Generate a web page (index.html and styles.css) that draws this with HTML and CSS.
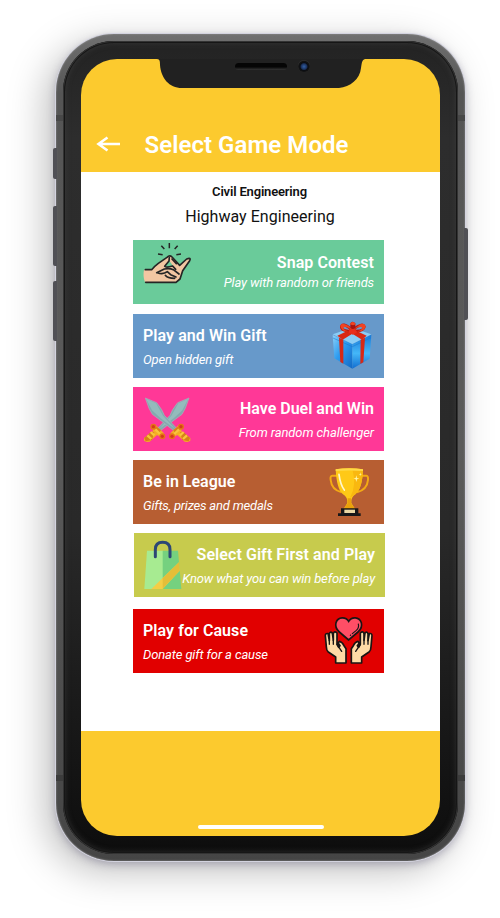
FILE: index.html
```html
<!DOCTYPE html>
<html lang="en">
<head>
<meta charset="utf-8">
<title>Select Game Mode</title>
<link rel="stylesheet" href="styles.css">
</head>
<body>
<div class="phone">
  <i class="key mute"></i><i class="key vol-up"></i><i class="key vol-down"></i><i class="key power"></i>
  <i class="band top"></i><i class="band bottom"></i>
  <div class="bezel">
    <div class="screen">
      <svg class="notch" width="208" height="30" viewBox="0 0 208 30"><path d="M0 0C3 0 3 3 3 6C4 19 12 29 25 29H182C193 28 203 20 204 9C205 3 205 1 208 0Z" fill="#212121"/></svg>
      <i class="speaker"></i><i class="camera"></i>
      <header class="bar">
        <svg class="back" width="25" height="16" viewBox="0 0 25 16"><path d="M11.500 1.500L2.500 8l9 6.500M2.500 8H24" fill="none" stroke="#fff" stroke-width="2.600"/></svg>
        <h1>Select Game Mode</h1>
      </header>
      <main>
        <div class="branch">Civil Engineering</div>
        <div class="subject">Highway Engineering</div>
        <section class="modes">
          <article class="card snap">
            <svg viewBox="9 15 192 192">
              <path fill="#f2c6a2" d="M42 104H66L84 85L112 66Q119 60 125 65L149 92L170 73Q181 66 178 76L158 107L150 130L138 142H45Q38 124 42 104Z"/>
              <path fill="#6acb9a" d="M103 96L118 77L130 94L116 97Z"/>
              <g fill="none" stroke="#252525" stroke-width="5" stroke-linecap="round" stroke-linejoin="round">
                <path d="M46 104H65Q74 93 85 85L111 67Q119 59 126 66L149 91L170 72Q184 67 179 77L158 107L150 132L138 142H47"/>
                <path d="M118 68L117 78L104 94Q108 99 128 93L137 103M126 72L139 86"/>
                <path d="M80 113L103 102Q119 99 130 104L147 117M82 113Q99 120 112 110L122 119L138 126M106 121Q112 130 134 130"/>
              </g>
              <path fill="none" stroke="#252525" stroke-width="4.500" d="M118 24V40M94 32L103 42M143 32L134 42M84 57L98 59M153 57L139 59"/>
            </svg>
            <div class="label"><h2>Snap Contest</h2><p>Play with random or friends</p></div>
          </article>
          <article class="card gift">
            <svg viewBox="0 6 192 192">
              <defs>
                <linearGradient id="left-face" x2="1" y2="1"><stop stop-color="#8bd0fa"/><stop offset=".45" stop-color="#2d9cf0"/><stop offset="1" stop-color="#1268c4"/></linearGradient>
                <linearGradient id="right-face" x2="0" y2="1"><stop stop-color="#1878d7"/><stop offset=".55" stop-color="#44b7f8"/><stop offset="1" stop-color="#126dd0"/></linearGradient>
              </defs>
              <path fill="url(#left-face)" d="M38 69L97 96V170L43 139Z"/>
              <path fill="url(#right-face)" d="M97 96L154 68L149 140L97 170Z"/>
              <path fill="#8acdf6" d="M38 67L96 47L154 67L97 96Z"/>
              <path fill="none" stroke="#1677ca" stroke-width="1.500" d="M39 78L97 104L153 77"/>
              <path fill="#d62916" d="M57 77L70 83V155L61 150ZM122 83L135 77L130 151L121 156Z"/>
              <path fill="#d92814" d="M52 71L96 50L140 71L126 83L97 65L68 83Z"/>
              <g fill="none" stroke="#b91b13" stroke-width="8"><path d="M94 56Q63 59 64 43Q68 31 92 50"/><path d="M98 56Q130 60 133 44Q129 31 102 50"/></g>
              <path fill="#a71310" d="M91 56V34Q97 25 106 34V57Z"/>
              <path fill="#f04422" d="M61 42Q64 31 75 37Q87 40 96 52L87 49Q73 40 70 49Q73 56 86 58Q65 61 61 42ZM137 42Q132 31 121 37L101 52Q124 41 127 48Q125 55 111 58Q135 60 137 42ZM89 37Q98 22 108 37L99 40Z"/>
              <path fill="#e92f1b" d="M88 52L105 50L112 61L98 68L85 61Z"/>
            </svg>
            <div class="label"><h2>Play and Win Gift</h2><p>Open hidden gift</p></div>
          </article>
          <article class="card duel">
            <svg viewBox="9 6 192 192">
              <defs><g id="sword">
                <path fill="#84a9ae" stroke="#a5b4bd" stroke-width="2" d="M46 39L80 53Q98 75 103 91L142 132L134 139L94 108L67 88L57 70Z"/>
                <path fill="#94bbbc" d="M48 41L78 55L99 92L136 133L91 99L66 76Z"/>
                <path fill="#f4ad25" d="M121 145L147 119L156 126L154 139L181 159V167L173 171L164 170L142 150L130 157Z"/>
                <path fill="#d88119" d="M150 142L161 141L180 159L176 169L157 165ZM130 135L143 125L151 131L137 147Z"/>
                <circle cx="153" cy="125" r="9" fill="#e67519"/><circle cx="153" cy="125" r="5" fill="#d53d1a"/>
                <circle cx="126" cy="154" r="9" fill="#e67519"/><circle cx="126" cy="154" r="5" fill="#d53d1a"/>
                <path stroke="#f9c53b" stroke-width="7" d="M133 147L147 133M150 151L161 141M159 162L171 151"/>
              </g></defs>
              <use href="#sword" transform="translate(223) scale(-1 1)"/>
              <use href="#sword"/>
            </svg>
            <div class="label"><h2>Have Duel and Win</h2><p>From random challenger</p></div>
          </article>
          <article class="card league">
            <svg viewBox="15 6 192 192">
              <g fill="none" stroke="#f4aa14" stroke-width="6"><path d="M66 53H52Q45 53 47 66C49 87 60 98 80 103"/><path d="M140 53H154Q160 53 159 66C157 87 145 98 126 103"/></g>
              <path fill="#ffc917" d="M62 34Q103 27 144 34Q142 91 122 108Q107 118 109 135L120 153H86L97 135Q99 118 83 108Q65 93 62 34Z"/>
              <path fill="#f9b810" d="M112 33Q130 32 144 34Q142 91 122 108Q112 116 105 119Q126 83 112 33Z"/>
              <path fill="#eaa00b" d="M98 121H108V136L121 154H85L98 136Z"/>
              <path fill="#ffd947" d="M62 34Q103 27 144 34V39Q103 36 62 39Z"/>
              <path fill="none" stroke="#fff7ce" stroke-width="5" stroke-linecap="round" d="M72 49Q76 80 88 96"/>
              <path fill="#fff6a8" d="M124 52l2 8 7 2-7 2-2 8-2-8-7-2 7-2ZM136 43l1 5 4 1-4 1-1 5-1-5-4-1 4-1Z"/>
              <path fill="#171719" d="M78 151H130V166H137V174H69V166H78Z"/>
              <path fill="#ead8a5" d="M88 155H120V165H88Z"/>
            </svg>
            <div class="label"><h2>Be in League</h2><p>Gifts, prizes and medals</p></div>
          </article>
          <article class="card choose">
            <svg viewBox="12 9 192 192">
              <path fill="#a7eb91" d="M51 62H99V177H43Z"/><path fill="#75d17f" d="M98 62H144L154 177H98Z"/>
              <path fill="#f4ce45" d="M64 177L147 97L149 122L98 177Z"/><path fill="#e4be39" d="M98 145L147 97L149 122L98 176Z"/>
              <path fill="none" stroke="#2d4775" stroke-width="9" stroke-linecap="round" d="M76 80V59Q76 37 98 37Q120 37 120 59V80"/>
            </svg>
            <div class="label"><h2>Select Gift First and Play</h2><p>Know what you can win before play</p></div>
          </article>
          <article class="card cause">
            <svg viewBox="15 9 192 192">
              <defs><g id="palm">
                <path fill="#ffdaa5" stroke="#191514" stroke-width="5" stroke-linejoin="round" d="M62 171V153L40 138Q34 133 34 122L31 89Q31 81 39 83L43 104V84Q45 75 52 81L55 103V83Q58 73 66 81L66 115L71 124L75 119Q67 111 73 106Q81 107 87 119L93 128V171Z"/>
                <path fill="none" stroke="#191514" stroke-width="4" stroke-linecap="round" d="M43 103V115M55 102V115M66 115L80 136"/>
              </g></defs>
              <use href="#palm"/><use href="#palm" transform="translate(202) scale(-1 1)"/>
              <path fill="#ff4e66" stroke="#191514" stroke-width="5" d="M101 102L73 78Q59 66 63 50C69 31 93 32 101 46C110 31 133 32 139 50Q143 66 129 78Z"/>
              <path fill="none" stroke="#191514" stroke-width="3.500" stroke-linecap="round" d="M130 54Q133 65 124 73L112 83M107 87L106 88"/>
            </svg>
            <div class="label"><h2>Play for Cause</h2><p>Donate gift for a cause</p></div>
          </article>
        </section>
      </main>
      <footer><i class="home"></i></footer>
    </div>
  </div>
</div>
</body>
</html>
```
FILE: styles.css
```css
* { box-sizing: border-box; }
body { margin: 0; height: 918px; padding: 34px 0 0 56px; overflow: hidden; background: #fff; font-family: Roboto, sans-serif; }
h1, h2, p { margin: 0; white-space: nowrap; }
.phone { position: relative; width: 409px; height: 827px; padding: 7px; border-radius: 58px; background: linear-gradient(#707070 0, #555 60px, #5b5b5b 50%, #454545 100%); box-shadow: inset 0 0 2px #999, 0 0 0 1px #d3d3df, 0 3px 8px rgba(75,70,105,.35), -10px 10px 38px rgba(0,0,0,.26); }
.bezel { position: relative; width: 395px; height: 813px; padding: 18px; border-radius: 51px; background: linear-gradient(#232323, #2d2d2d 12%, #292929 60%, #0d0d0d); box-shadow: inset 0 0 0 1px #333, inset 0 0 0 2px #161616, inset 0 0 7px #444; }
.screen { position: relative; display: flex; flex-direction: column; width: 359px; height: 777px; border-radius: 36px; overflow: hidden; background: #fcca2e; }
.notch { position: absolute; left: 76px; top: 0; }
.speaker { position: absolute; left: 154px; top: 4px; width: 52px; height: 7px; border-radius: 4px; background: linear-gradient(#050505 55%, #353535); }
.camera { position: absolute; left: 217px; top: 1px; width: 12px; height: 12px; border-radius: 50%; background: radial-gradient(circle at 50% 55%, #3260a5, #1b315c 32%, #0b0e13 44%, #131313 60%, #303030 70%); }
.bar { display: flex; align-items: flex-start; height: 113px; padding: 71px 0 0 14px; }
.back { margin: 6px 23.500px 0 1px; flex: none; }
h1 { color: #fff; font-size: 24px; line-height: 30px; font-weight: 600; letter-spacing: .05px; }
main { height: 559px; background: #fff; text-align: center; color: #111; padding-top: 11px; }
.branch { font-size: 13px; line-height: 18px; font-weight: 600; letter-spacing: -.17px; padding-right: 2px; }
.subject { font-size: 16px; line-height: 20px; margin-top: 6px; letter-spacing: .03px; padding-right: 1px; }
.modes { display: flex; flex-direction: column; gap: 9px; padding: 13px 56px 0 52px; }
.card { display: flex; justify-content: space-between; width: 251px; height: 64px; color: #fff; }
.card svg { width: 64px; height: 64px; flex: none; }
.label { flex: 1; width: 0; display: flex; flex-direction: column; padding: 12px 10px 0 0; align-items: flex-end; }
h2 { font-size: 16px; line-height: 20px; font-weight: 600; letter-spacing: .07px; }
.label p { font-size: 13px; line-height: 16px; margin-top: 6px; font-style: italic; letter-spacing: -.13px; }
.gift, .league, .cause { flex-direction: row-reverse; }
.gift .label, .league .label, .cause .label { align-items: flex-start; padding: 12px 0 0 10px; }
.snap { background: #6acb9a; margin-bottom: 1px; }
.snap .label p { margin-top: 2px; }
.snap .label { padding-top: 13px; }
.gift { background: #6799ca; }
.duel { background: #ff3897; }
.duel h2, .league h2 { letter-spacing: 0; }
.duel .label p { letter-spacing: -.08px; }
.league { background: #b75e32; }
.league .label p { letter-spacing: -.21px; }
.choose { background: #c7cb4d; margin-left: 1px; }
.cause { background: #e10000; margin-top: 3px; }
footer { flex: 1; display: flex; justify-content: center; align-items: flex-end; padding-bottom: 7px; }
.home { width: 126px; height: 4px; border-radius: 2px; background: #fff; }
.key { position: absolute; left: -3px; width: 4px; border-radius: 2px 0 0 2px; background: #505055; }
.mute { top: 114px; height: 31px; }
.vol-up { top: 172px; height: 60px; }
.vol-down { top: 247px; height: 60px; }
.power { left: auto; right: -3px; top: 194px; height: 92px; border-radius: 0 2px 2px 0; }
.band { position: absolute; left: 0; right: 0; height: 6px; background: #484848; }
.band.top { top: 81px; }
.band.bottom { bottom: 80px; background: #3c3c3c; }
```
